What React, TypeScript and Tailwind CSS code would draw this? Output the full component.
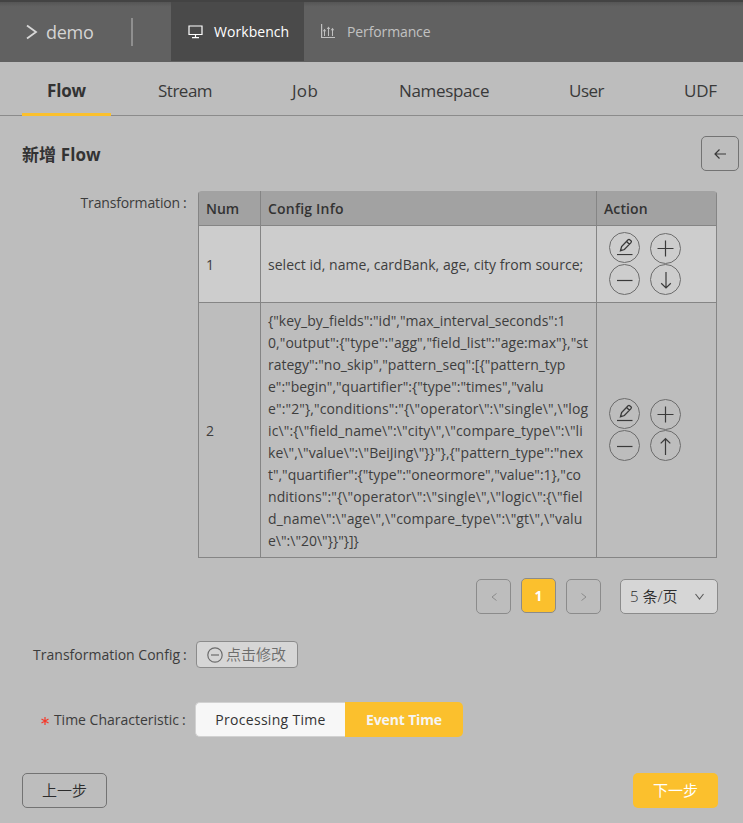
import type { ReactNode } from "react";

const configLines = [
  { text: '{"key_by_fields":"id","max_interval_seconds":1', spacing: "" },
  { text: '0,"output":{"type":"agg","field_list":"age:max"},"st', spacing: "tracking-[0.06px]" },
  { text: 'rategy":"no_skip","pattern_seq":[{"pattern_typ', spacing: "" },
  { text: 'e":"begin","quartifier":{"type":"times","valu', spacing: "" },
  { text: 'e":"2"},"conditions":"{\\"operator\\":\\"single\\",\\"log', spacing: "tracking-[0.11px]" },
  { text: 'ic\\":{\\"field_name\\":\\"city\\",\\"compare_type\\":\\"li', spacing: "tracking-[0.11px]" },
  { text: 'ke\\",\\"value\\":\\"BeiJing\\"}}"},{"pattern_type":"nex', spacing: "tracking-[0.06px]" },
  { text: 't","quartifier":{"type":"oneormore","value":1},"co', spacing: "tracking-[-0.03px]" },
  { text: 'nditions":"{\\"operator\\":\\"single\\",\\"logic\\":{\\"fiel', spacing: "tracking-[0.11px]" },
  { text: 'd_name\\":\\"age\\",\\"compare_type\\":\\"gt\\",\\"valu', spacing: "tracking-[0.15px]" },
  { text: 'e\\":\\"20\\"}}"}]}', spacing: "" },
];

function CircleIcon({ children, className = "" }: { children: ReactNode; className?: string }) {
  return (
    <svg className={`block h-[31px] w-[31px] ${className}`} viewBox="0 0 31 31" fill="none" stroke="#3a3a3a" strokeWidth="1.2">
      <circle cx="15.5" cy="15.5" r="15" stroke="#6c6c6c" strokeWidth="1" />
      {children}
    </svg>
  );
}

function Actions({ direction }: { direction: "up" | "down" }) {
  return (
    <div className="flex gap-[10px] pb-[2px] pl-3">
      <div className="flex flex-col gap-px">
        <CircleIcon>
          <path d="M8 22.5H23.5" />
          <path d="M11.5 18.7L12.6 14.6L19.1 7.8Q20 7 21 7.9L22 8.8Q22.9 9.7 22 10.6L15.4 17.5Z M17.6 9.5L20.4 12.2" strokeWidth="1.3" />
        </CircleIcon>
        <CircleIcon>
          <path d="M8 16.5H23.5" />
        </CircleIcon>
      </div>
      <div className="flex flex-col pt-px">
        <CircleIcon>
          <path d="M7.5 15.5H23.5M15.5 7.5V23.5" />
        </CircleIcon>
        <CircleIcon>
          {direction === "down" ? (
            <path d="M16 8V24M11.2 19.3L16 24L20.8 19.3" />
          ) : (
            <path d="M15.5 25V9M10.7 13.4L15.5 8.7L20.3 13.4" />
          )}
        </CircleIcon>
      </div>
    </div>
  );
}

function Header() {
  return (
    <header className="flex h-[62px] border-t-2 border-[#434343] bg-[#616161] bg-linear-to-b from-[#555555] from-0% to-[#616161] to-[8%]">
      <div className="flex w-[171px] items-center pl-[26px]">
        <svg className="h-4 w-3" viewBox="0 0 12 16" fill="none" stroke="#d8d8d8" strokeWidth="1.8">
          <path d="M1 1.5L10 8L1 14.5" />
        </svg>
        <span className="ml-[8px] w-[48px] text-[18px] tracking-[-0.3px] text-[#d4d4d4]">demo</span>
        <span className="ml-[37px] h-7 w-[2px] bg-[#8f8f8f]" />
      </div>
      <div className="flex h-[59px] w-[133px] items-center bg-[#4a4a4a] pl-[17px] text-white">
        <svg className="h-[14px] w-[15px]" viewBox="0 0 15 14" fill="none" stroke="currentColor" strokeWidth="1.2">
          <path d="M1 1H14V9.5H1Z M7.5 9.5V12.5M4 12.6H11" />
        </svg>
        <span className="ml-[11px] text-sm tracking-[0.06px]">Workbench</span>
      </div>
      <div className="flex h-[59px] items-center pl-[17px] text-[#c1c1c1]">
        <svg className="h-[15px] w-[14px]" viewBox="0 0 14 15" fill="none" stroke="currentColor" strokeWidth="1">
          <path d="M.6 0V13.5H14" strokeWidth="1.2" />
          <path d="M3.5 12V5.5M7.5 12V4M11.5 12V5" />
          <path d="M1.8 7.2L3.5 4.8L5.2 7.2ZM5.8 4.9L7.5 2.5L9.2 4.9ZM9.8 6.2L11.5 3.8L13.2 6.2Z" fill="currentColor" stroke="none" />
        </svg>
        <span className="ml-[12px] text-sm tracking-[-0.12px]">Performance</span>
      </div>
    </header>
  );
}

function Tabs() {
  return (
    <nav className="flex h-[54px] border-b border-[#8b8b8b] pl-[22px] text-[17px] leading-[57px] text-[#393939]">
      <div className="-mb-px h-[54px] w-[89px] border-b-[3px] border-[#fbc02d] text-center font-bold tracking-[-0.15px] text-[#333]">Flow</div>
      <span className="ml-[47px] w-[134px] tracking-[-0.5px]">Stream</span>
      <span className="w-[107px] tracking-[0.3px]">Job</span>
      <span className="w-[170px] tracking-[-0.34px]">Namespace</span>
      <span className="w-[115px] tracking-[-0.5px]">User</span>
      <span className="tracking-[-0.2px]">UDF</span>
    </nav>
  );
}

function Label({ children, className = "", required = false }: { children: ReactNode; className?: string; required?: boolean }) {
  return (
    <div className={`flex justify-end text-sm leading-[22px] text-[#3c3c3c] ${className}`}>
      {required && (
        <svg className="mr-[5px] mt-[8px] h-2 w-2" viewBox="0 0 8 8" stroke="#f5392b" strokeWidth="1.2">
          <path d="M4 0V8M.5 2L7.5 6M7.5 2L.5 6" />
        </svg>
      )}
      <span>{children}</span>
      <span className="ml-[3px] w-[4px]">:</span>
    </div>
  );
}

export default function App() {
  return (
    <div className="flex h-[823px] w-[743px] flex-col overflow-hidden bg-[#bdbdbd] font-['Open_Sans','Noto_Sans_CJK_SC',sans-serif]">
      <Header />
      <Tabs />

      <div className="flex h-[75px] justify-between pl-[22px] pr-1 pt-[20px]">
        <h1 className="h-[38px] text-[17px] font-bold leading-[38px] tracking-[0.1px] text-[#333]">新增 Flow</h1>
        <button className="flex h-[35px] w-[38px] items-center justify-center rounded-[5px] border border-[#737373]">
          <svg className="h-3 w-3" viewBox="0 0 12 12" fill="none" stroke="#3a3a3a" strokeWidth="1.2">
            <path d="M12 6H1M5.5 1.5L1 6L5.5 10.5" />
          </svg>
        </button>
      </div>

      <div className="flex">
        <Label className="w-[187px] pt-px tracking-[-0.15px]">Transformation</Label>
        <div className="ml-[11px] grid h-[367px] w-[519px] grid-cols-[62px_336px_121px] grid-rows-[35px_77px_255px] overflow-hidden rounded-t-[4px] text-sm leading-[22px] text-[#3e3e3e]">
          <div className="border-b border-l border-[#858585] bg-[#a2a2a2] pl-[7px] pt-[7px] font-semibold text-[#333]">Num</div>
          <div className="border-b border-l border-[#858585] bg-[#a2a2a2] pl-[7px] pt-[7px] font-semibold tracking-[0.2px] text-[#333]">Config Info</div>
          <div className="border-x border-b border-[#858585] bg-[#a2a2a2] pl-[7px] pt-[7px] font-semibold tracking-[0.1px] text-[#333]">Action</div>

          <div className="flex items-center border-b border-l border-[#858585] bg-[#cdcdcd] pl-[7px] pt-[2px]">1</div>
          <div className="flex items-center whitespace-nowrap border-b border-l border-[#858585] bg-[#cdcdcd] pl-[7px] pt-[2px] tracking-[0.04px]">
            select id, name, cardBank, age, city from source;
          </div>
          <div className="flex items-center border-x border-b border-[#858585] bg-[#cdcdcd]">
            <Actions direction="down" />
          </div>

          <div className="flex items-center border-b border-l border-[#858585] pl-[7px] pt-[2px]">2</div>
          <div className="border-b border-l border-[#858585] pl-[7px] pt-[7px]">
            {configLines.map((line) => (
              <div key={line.text} className={`h-[22px] whitespace-pre ${line.spacing}`}>
                {line.text}
              </div>
            ))}
          </div>
          <div className="flex items-center border-x border-b border-[#858585]">
            <Actions direction="up" />
          </div>
        </div>
      </div>

      <div className="mt-[20px] flex h-9 items-end pl-[476px]">
        <button className="flex h-[35px] w-[35px] items-center justify-center rounded-[5px] border border-[#8b8b8b]">
          <svg className="h-2 w-[6px]" viewBox="0 0 6 8" fill="none" stroke="#8b8b8b" strokeWidth="1">
            <path d="M5.5 .5L1 4L5.5 7.5" />
          </svg>
        </button>
        <button className="mb-px ml-[10px] h-[35px] w-[35px] rounded-[5px] border border-[#8b8b8b] bg-[#fbc02d] text-sm font-bold text-white">1</button>
        <button className="ml-[10px] flex h-[35px] w-[35px] items-center justify-center rounded-[5px] border border-[#8b8b8b]">
          <svg className="h-2 w-[6px]" viewBox="0 0 6 8" fill="none" stroke="#8b8b8b" strokeWidth="1">
            <path d="M.5 .5L5 4L.5 7.5" />
          </svg>
        </button>
        <div className="ml-[19px] flex h-[35px] w-[98px] items-center justify-between rounded-[5px] border border-[#8b8b8b] bg-[#d6d6d6] pl-[9px] pr-[13px] text-[15px] font-[350] text-[#2c2c2c]">
          <span>5 条/页</span>
          <svg className="h-[7px] w-[9px]" viewBox="0 0 9 7" fill="none" stroke="#5a5a5a" strokeWidth="1.1">
            <path d="M.5 1L4.5 6L8.5 1" />
          </svg>
        </div>
      </div>

      <div className="mt-[27px] flex h-[27px] items-center">
        <Label className="w-[187px]">Transformation Config</Label>
        <button className="ml-[9px] flex h-[27px] w-[102px] items-center rounded-[4px] border border-[#8b8b8b] bg-[#d6d6d6] pl-[10px] text-[15px] font-[350] leading-[22px] text-[#6c6c6c]">
          <svg className="h-4 w-4" viewBox="0 0 16 16" fill="none" stroke="currentColor" strokeWidth="1.2">
            <circle cx="8" cy="8" r="7.2" />
            <path d="M4 8H12" />
          </svg>
          <span className="mb-[2px] ml-[3px] whitespace-nowrap">点击修改</span>
        </button>
      </div>

      <div className="mt-[34px] flex h-[35px] items-center">
        <Label className="w-[186px]" required>
          Time Characteristic
        </Label>
        <button className="ml-[9px] h-[35px] w-[150px] rounded-l-[5px] border border-r-0 border-[#d2d2d2] bg-[#f7f7f7] text-sm tracking-[0.3px] text-[#333]">Processing Time</button>
        <button className="h-[35px] w-[118px] rounded-r-[5px] bg-[#fbc02d] text-sm font-bold tracking-[-0.15px] text-[#f5f5f5]">Event Time</button>
      </div>

      <div className="mt-[36px] flex justify-between pl-[22px] pr-[25px]">
        <button className="h-[35px] w-[85px] rounded-[5px] border border-[#737373] text-[15px] font-[350] text-[#2c2c2c]">上一步</button>
        <button className="h-[35px] w-[85px] rounded-[5px] bg-[#fbc02d] text-[15px] text-white">下一步</button>
      </div>
    </div>
  );
}
